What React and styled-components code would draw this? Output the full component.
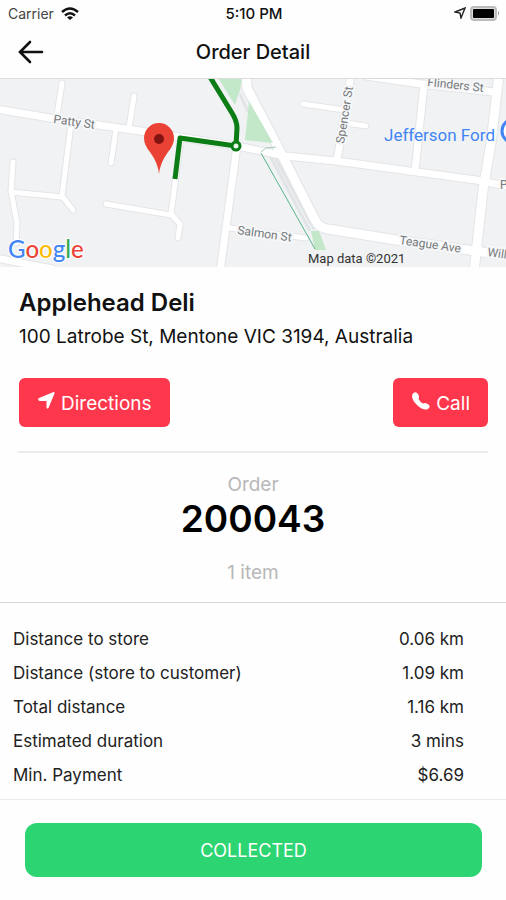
import styled, { createGlobalStyle } from "styled-components"

const GlobalStyle = createGlobalStyle`
  * {
    box-sizing: border-box;
  }
  body {
    margin: 0;
    background-color: #fefefe;
    color: #111;
    font-family: Inter, "Liberation Sans", sans-serif;
  }
`
const Container = styled.div`
  display: flex;
  flex-direction: column;
  min-height: 100vh;
`
const StatusBar = styled.div`
  display: grid;
  grid-template-columns: 1fr auto 1fr;
  align-items: center;
  height: 26px;
  padding: 0 6px 0 8px;
  font-size: 14px;
`
const Carrier = styled.div`
  display: flex;
  align-items: center;
  gap: 7px;
  color: #444;
`
const Time = styled.div`
  font-size: 15px;
  font-weight: 500;
`
const Indicators = styled.div`
  display: flex;
  justify-content: flex-end;
  align-items: center;
  gap: 4px;
`
const Header = styled.header`
  display: grid;
  grid-template-columns: 1fr auto 1fr;
  align-items: center;
  height: 52px;
  padding: 0 16px;
`
const BackButton = styled.button`
  display: flex;
  justify-self: start;
  border: none;
  padding: 0;
  background: none;
  cursor: pointer;
`
const Title = styled.h1`
  margin: 0;
  font-size: 20px;
  font-weight: 500;
`
const Map = styled.svg`
  display: block;
  width: 100%;
  height: 189px;
  background-color: #f1f2f4;
  font-family: Roboto, sans-serif;
`
const Store = styled.section`
  margin: 0 18px;
  padding: 20px 0 24px;
  border-bottom: 2px solid #ebebeb;
`
const StoreName = styled.h2`
  margin: 0;
  padding-left: 1px;
  font-size: 24px;
  font-weight: 600;
  line-height: 32px;
`
const Address = styled.p`
  margin: 0;
  padding-left: 1px;
  font-size: 19px;
  line-height: 36px;
`
const Actions = styled.div`
  display: flex;
  justify-content: space-between;
  margin-top: 23px;
  padding-left: 1px;
`
const ActionLink = styled.a`
  display: flex;
  align-items: center;
  gap: 6px;
  height: 49px;
  padding: 2px 18px 0 19px;
  border-radius: 6px;
  background-color: #ff374c;
  color: white;
  font-size: 19px;
  text-decoration: none;

  svg {
    margin-bottom: 6px;
  }
`
const Order = styled.section`
  display: flex;
  flex-direction: column;
  align-items: center;
  padding: 19px 0 16px;
  border-bottom: 1px solid #d8d8d8;
`
const Muted = styled.span`
  color: #b8b8b8;
  font-size: 19px;
  line-height: 26px;
`
const OrderNumber = styled.strong`
  margin-bottom: 20px;
  color: #000;
  font-size: 37px;
  font-weight: 600;
  line-height: 42px;
`
const Summary = styled.dl`
  margin: 0;
  padding: 19px 42px 7px 13px;
  border-bottom: 1px solid #ececec;
`
const Row = styled.div`
  display: flex;
  justify-content: space-between;
  font-size: 17px;
  line-height: 34px;
`
const Label = styled.dt`
  color: #222;
`
const Value = styled.dd`
  margin: 0;
  color: #222;
`
const Footer = styled.footer`
  padding: 23px 24px 23px 25px;
`
const CollectedButton = styled.button`
  width: 100%;
  height: 54px;
  border: none;
  border-radius: 12px;
  background-color: #2dd572;
  color: white;
  font-family: inherit;
  font-size: 18px;
  cursor: pointer;
`

const rows = [
  { label: "Distance to store", value: "0.06 km" },
  { label: "Distance (store to customer)", value: "1.09 km" },
  { label: "Total distance", value: "1.16 km" },
  { label: "Estimated duration", value: "3 mins" },
  { label: "Min. Payment", value: "$6.69" },
]

const minorRoads = [
  "M62 5 L57 37",
  "M134 18 L129 50",
  "M116 51 L111 85",
  "M71 46 L62 118 L73 132",
  "M13 84 L11 113 L17 145 L16 165",
  "M11 114 L62 119",
  "M106 126 L171 137",
  "M181 60 L171 136 L180 146 L178 160",
  "M230 150 L306 160",
  "M303 26 L345 32",
  "M346 45 L366 48",
]
const streets = [
  "M-4 31 L50 40 L147 54 L237 68 L285 78 L336 83 L476 102 L512 109",
  "M237 68 L220 194",
  "M351 -4 L337 83",
  "M366 -2 L428 7 L494 14",
  "M424 6 L415 93",
  "M-4 180 L52 191",
]
const mainRoads = [
  "M246 -4 L247 10 L282 77 L315 142 Q319 150 328 151 L396 162 L512 178",
  "M499 -4 L491 65 L483 112 L474 194",
]

const StoreMap = () => {
  return (
    <Map viewBox="0 0 506 189" preserveAspectRatio="xMidYMid slice" role="img" aria-label="Map to store">
      <path d="M240 16 L248 34 M268 74 L310 153 M271 72 L314 151" stroke="#e1e4e7" strokeWidth="3" fill="none" />
      <g fill="none" stroke="#e3e5e8" strokeLinecap="round" strokeLinejoin="round">
        {minorRoads.map((d) => <path key={d} d={d} strokeWidth="7" />)}
        {streets.map((d) => <path key={d} d={d} strokeWidth="9" />)}
        {mainRoads.map((d) => <path key={d} d={d} strokeWidth="11" />)}
      </g>
      <g fill="none" stroke="white" strokeLinecap="round" strokeLinejoin="round">
        {minorRoads.map((d) => <path key={d} d={d} strokeWidth="5" />)}
        {streets.map((d) => <path key={d} d={d} strokeWidth="7" />)}
        {mainRoads.map((d) => <path key={d} d={d} strokeWidth="9" />)}
      </g>
      <path d="M218 0 H242 L240 12 L235 27 Z M249 23 L273 65 L245 62 L248 34 Z M311 153 L319 153 L326 172 L315 172 Z" fill="#c3e7c9" />
      <path d="M261 75 L315 171" stroke="#57b58a" strokeWidth="1" />
      <path d="M261 74 L266 70 L276 69" stroke="#a9c9ba" strokeWidth="1" fill="none" />
      <g fill="none" stroke="#0b7d14" strokeWidth="5" strokeLinejoin="round">
        <path d="M210 -1 L232 35 Q237 43 237 50 L236 68 L180 60 L175 101" />
        <circle cx="236" cy="68" r="4" fill="#e9f5ea" strokeWidth="3" />
      </g>
      <path d="M159 96 Q158 85 150 74 Q144 67 144 60 A15 15 0 0 1 174 60 Q174 67 168 74 Q160 85 159 96 Z" fill="#ea4335" />
      <circle cx="159" cy="61" r="5" fill="#811411" />
      <g fill="#77797c" fontSize="12" stroke="#f6f7f8" strokeWidth="4" paintOrder="stroke">
        <text transform="translate(53 45) rotate(8)">Patty St</text>
        <text transform="translate(237 156) rotate(8)">Salmon St</text>
        <text transform="translate(427 8) rotate(6)">Flinders St</text>
        <text transform="translate(399 166) rotate(8)">Teague Ave</text>
        <text transform="translate(487 178) rotate(8)">Will</text>
        <text transform="translate(344 66) rotate(-81)">Spencer St</text>
        <text x="500" y="111">P</text>
      </g>
      <text x="384" y="63" fontSize="17" fill="#4285f4">Jefferson Ford</text>
      <circle cx="514" cy="53" r="12" fill="white" stroke="#4285f4" strokeWidth="3" />
      <g fontSize="24" fontFamily="Lato, sans-serif" fontWeight="500">
        <text x="8" y="180" stroke="white" strokeWidth="2" paintOrder="stroke">
          <tspan fill="#4285f4">G</tspan>
          <tspan fill="#ea4335">o</tspan>
          <tspan fill="#fbbc05">o</tspan>
          <tspan fill="#4285f4">g</tspan>
          <tspan fill="#34a853">l</tspan>
          <tspan fill="#ea4335">e</tspan>
        </text>
      </g>
      <text x="308" y="185" fontSize="13" fill="#333">Map data ©2021</text>
      <path d="M0 0 H506" stroke="#dcdcdc" strokeWidth="2" />
    </Map>
  )
}

const App = () => {
  return (
    <Container>
      <GlobalStyle />
      <StatusBar>
        <Carrier>
          Carrier
          <svg width="18" height="13" viewBox="0 0 18 13" fill="none" stroke="#111" strokeWidth="2.4">
            <path d="M1 5 Q9 -2 17 5" />
            <path d="M4 8.5 Q9 4 14 8.5" />
            <path d="M9 13 L6 10.5 Q9 8 12 10.5 Z" fill="#111" stroke="none" />
          </svg>
        </Carrier>
        <Time>5:10 PM</Time>
        <Indicators>
          <svg width="12" height="12" viewBox="0 0 12 12" fill="none" stroke="#222" strokeWidth="1.4">
            <path d="M1 5 L11 1 L7 11 L6 6 Z" />
          </svg>
          <svg width="30" height="15" viewBox="0 0 30 15">
            <rect x="1" y="1" width="25" height="13" rx="3" fill="#ddd" stroke="#bbb" strokeWidth="2" />
            <rect x="3" y="3" width="21" height="9" rx="1" fill="#000" />
            <path d="M28 5 Q30 7 28 10 Z" fill="#999" />
          </svg>
        </Indicators>
      </StatusBar>
      <Header>
        <BackButton aria-label="Back">
          <svg width="28" height="24" viewBox="0 0 28 24" fill="none" stroke="#111" strokeWidth="2.6" strokeLinecap="round">
            <path d="M26 12 H5 M14 2 L4 12 L14 22" />
          </svg>
        </BackButton>
        <Title>Order Detail</Title>
      </Header>
      <StoreMap />
      <Store>
        <StoreName>Applehead Deli</StoreName>
        <Address>100 Latrobe St, Mentone VIC 3194, Australia</Address>
        <Actions>
          <ActionLink href="#directions">
            <svg width="17" height="17" viewBox="0 0 17 17" fill="white">
              <path d="M1 6 L15.500 0 Q17 0 16.500 1.500 L10.500 16 Q9 17.500 8.500 15.500 V9 H1.500 Q-1 8 1 6 Z" />
            </svg>
            Directions
          </ActionLink>
          <ActionLink href="#call">
            <svg width="18" height="18" viewBox="0 0 18 18" fill="white">
              <path d="M0.500 2 Q3 -1 5.500 1.500 Q8 4.500 6.500 7 Q8 10 11 11.500 Q13.500 10 16.500 12.500 Q19 14.500 16 17 Q11.500 19 5.500 13.500 Q-1.500 7 0.500 2 Z" />
            </svg>
            Call
          </ActionLink>
        </Actions>
      </Store>
      <Order>
        <Muted>Order</Muted>
        <OrderNumber>200043</OrderNumber>
        <Muted>1 item</Muted>
      </Order>
      <Summary>
        {rows.map((row) => (
          <Row key={row.label}>
            <Label>{row.label}</Label>
            <Value>{row.value}</Value>
          </Row>
        ))}
      </Summary>
      <Footer>
        <CollectedButton>COLLECTED</CollectedButton>
      </Footer>
    </Container>
  )
}

export default App
